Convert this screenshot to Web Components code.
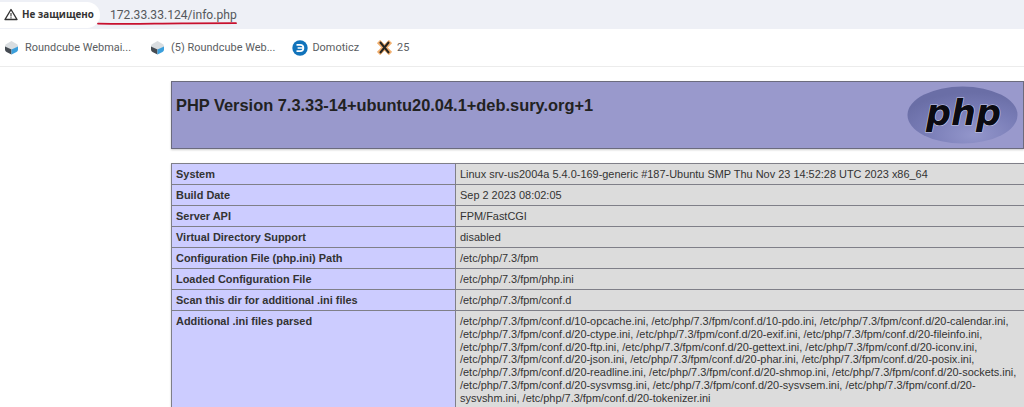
<!DOCTYPE html>
<html><head><meta charset="utf-8">
<style>html,body{margin:0;padding:0;background:#fff;height:407px;overflow:hidden}body{font-family:"Liberation Sans",Arial,sans-serif}</style>
</head><body>
<browser-chrome url="172.33.33.124/info.php" security="Не защищено">
<book-mark label="Roundcube Webmai..." kind="cube" style="--gap:19px"></book-mark>
<book-mark label="(5) Roundcube Web..." kind="cube" style="--gap:17px"></book-mark>
<book-mark label="Domoticz" kind="dom" style="--gap:18px;--ig:4px"></book-mark>
<book-mark label="25" kind="x" style="--ig:5px"></book-mark>
</browser-chrome>
<php-page>
<php-header>PHP Version 7.3.33-14+ubuntu20.04.1+deb.sury.org+1</php-header>
<php-table>
<php-row name="System">Linux srv-us2004a 5.4.0-169-generic #187-Ubuntu SMP Thu Nov 23 14:52:28 UTC 2023 x86_64</php-row>
<php-row name="Build Date">Sep 2 2023 08:02:05</php-row>
<php-row name="Server API">FPM/FastCGI</php-row>
<php-row name="Virtual Directory Support">disabled</php-row>
<php-row name="Configuration File (php.ini) Path">/etc/php/7.3/fpm</php-row>
<php-row name="Loaded Configuration File">/etc/php/7.3/fpm/php.ini</php-row>
<php-row name="Scan this dir for additional .ini files">/etc/php/7.3/fpm/conf.d</php-row>
<php-row name="Additional .ini files parsed">/etc/php/7.3/fpm/conf.d/10-opcache.ini, /etc/php/7.3/fpm/conf.d/10-pdo.ini, /etc/php/7.3/fpm/conf.d/20-calendar.ini,<br>/etc/php/7.3/fpm/conf.d/20-ctype.ini, /etc/php/7.3/fpm/conf.d/20-exif.ini, /etc/php/7.3/fpm/conf.d/20-fileinfo.ini,<br>/etc/php/7.3/fpm/conf.d/20-ftp.ini, /etc/php/7.3/fpm/conf.d/20-gettext.ini, /etc/php/7.3/fpm/conf.d/20-iconv.ini,<br>/etc/php/7.3/fpm/conf.d/20-json.ini, /etc/php/7.3/fpm/conf.d/20-phar.ini, /etc/php/7.3/fpm/conf.d/20-posix.ini,<br>/etc/php/7.3/fpm/conf.d/20-readline.ini, /etc/php/7.3/fpm/conf.d/20-shmop.ini, /etc/php/7.3/fpm/conf.d/20-sockets.ini,<br>/etc/php/7.3/fpm/conf.d/20-sysvmsg.ini, /etc/php/7.3/fpm/conf.d/20-sysvsem.ini, /etc/php/7.3/fpm/conf.d/20-<br>sysvshm.ini, /etc/php/7.3/fpm/conf.d/20-tokenizer.ini</php-row>
</php-table>
</php-page>
<script>
class BrowserChrome extends HTMLElement{
  constructor(){super();const s=this.attachShadow({mode:'open'});
  s.innerHTML=`<style>
  :host{display:block;font-family:"Roboto","Liberation Sans",sans-serif}
  .addr{height:29px;background:#eef0f6;display:flex;align-items:center;position:relative}
  .pill{height:26px;width:100px;box-sizing:border-box;padding:0 0 0 4px;background:#fff;border-radius:0 13px 13px 0;display:flex;align-items:center;gap:4px;font-size:9.8px;font-weight:700;color:#333;font-family:"Open Sans","Liberation Sans",sans-serif;}
  .url{margin-left:10px;font-size:12.1px;color:#55585c;font-family:"Roboto",sans-serif}
  .ul{position:absolute;left:97px;top:21px}
  .bar{height:38px;background:#fff;border-bottom:1px solid #ececec;display:flex;align-items:center;padding:0 0 0 4px;box-sizing:border-box}
  </style>
  <div class="addr"><div class="pill"><svg width="14" height="13" viewBox="0 0 14 13"><path d="M7 1.5 13 11.5H1Z" fill="none" stroke="#333" stroke-width="1.4" stroke-linejoin="round"/><path d="M7 5v3.4M7 9.3v1.1" stroke="#333" stroke-width="1.1"/></svg><span>${this.getAttribute('security')}</span></div>
  <div class="url">${this.getAttribute('url')}</div>
  <svg class="ul" width="142" height="5" viewBox="0 0 142 5"><path d="M1 2.6C40 3.6 60 2.2 90 2.4L139 2.2" stroke="#c8102e" stroke-width="1.8" fill="none" stroke-linecap="round"/></svg></div>
  <div class="bar"><slot></slot></div>`;}
}
customElements.define('browser-chrome',BrowserChrome);
const ICONS={
 cube:`<svg width="15" height="15" viewBox="0 0 15 15"><path d="M7.5 1 13.5 4.5 14 7 7.5 10 1 7 1.5 4.5Z" fill="#d9dde0"/><path d="M1 6.5 7.5 9.5V14.5L2.5 12Q1 11 1 9.5Z" fill="#454b52"/><path d="M14 6.5 7.5 9.5V14.5L12.5 12Q14 11 14 9.5Z" fill="#3b9fdc"/></svg>`,
 dom:`<svg width="16" height="16" viewBox="0 0 16 16"><circle cx="8" cy="8" r="7.7" fill="#1173bb"/><path d="M4.5 4.8H8.2a3.2 3.2 0 0 1 0 6.4H4.5M5.6 8H10.5" fill="none" stroke="#fff" stroke-width="1.7"/></svg>`,
 x:`<svg width="15" height="15" viewBox="0 0 15 15"><path d="M1.5 1.5 13.5 13.5M13.5 1.5 1.5 13.5" stroke="#f2b070" stroke-width="4.6"/><path d="M3 2 12 13M12 2 3 13" stroke="#26241f" stroke-width="2"/></svg>`};
class BookMark extends HTMLElement{
  constructor(){super();const s=this.attachShadow({mode:'open'});
  s.innerHTML=`<style>
  :host{display:flex;align-items:center;gap:var(--ig,6px);font-family:"Roboto","Liberation Sans",sans-serif;font-size:10.9px;color:#5a5d61;letter-spacing:.03px;margin-right:var(--gap,17px)}
  svg{display:block}
  </style>${ICONS[this.getAttribute('kind')]}<span>${this.getAttribute('label')}</span>`;}
}
customElements.define('book-mark',BookMark);
class PhpPage extends HTMLElement{
  constructor(){super();this.attachShadow({mode:'open'}).innerHTML=`<style>
  :host{display:block;padding:14px 0 0 171px;color:#222;font-family:"Liberation Sans",Arial,sans-serif}
  </style><slot></slot>`;}
}
customElements.define('php-page',PhpPage);
class PhpHeader extends HTMLElement{
  constructor(){super();this.attachShadow({mode:'open'}).innerHTML=`<style>
  :host{display:flex;justify-content:space-between;height:68px;box-sizing:border-box;background:#9999cc;border:1px solid #6b6b7d;padding:0 5px 0 4px;margin-bottom:14px;box-shadow:0 1px 2px #ccc}
  h1{margin:0;padding-top:13px;font-size:16.4px;line-height:20px;font-weight:700;color:#222}
  svg{margin-top:4px;display:block}
  .t{font:oblique 700 35px "DejaVu Sans",sans-serif;fill:#0b0b12;stroke:#c9cbe8;stroke-width:1.2px;paint-order:stroke}
  </style><h1><slot></slot></h1>
  <svg width="111" height="58" viewBox="0 0 111 58"><defs><radialGradient id="g" cx=".6" cy=".85" r=".75"><stop offset="0" stop-color="#9396cb"/><stop offset=".6" stop-color="#787cb6"/><stop offset="1" stop-color="#6a6ea6"/></radialGradient></defs><ellipse cx="55.5" cy="29" rx="55" ry="28.5" fill="url(#g)"/><text class="t" x="19" y="39">php</text></svg>`;}
}
customElements.define('php-header',PhpHeader);
class PhpTable extends HTMLElement{
  constructor(){super();this.attachShadow({mode:'open'}).innerHTML=`<style>
  :host{display:grid;grid-template-columns:283px 1fr;background:#7f7f88;gap:1px;padding:1px 0 1px 1px;box-shadow:0 1px 2px #ccc}
  ::slotted(php-row){display:contents}
  </style><slot></slot>`;}
}
customElements.define('php-table',PhpTable);
class PhpRow extends HTMLElement{
  constructor(){super();this.attachShadow({mode:'open'}).innerHTML=`<style>
  :host{display:contents;font-size:10.95px;line-height:12.75px}
  div{padding:4px 0 3px 4px;min-height:13px;white-space:nowrap}
  .e{background:#ccccff;font-weight:700;color:#333}
  .v{background:#dcdcdc;color:#333}
  </style><div class="e">${this.getAttribute('name')}</div><div class="v"><slot></slot></div>`;}
}
customElements.define('php-row',PhpRow);
</script>
</body></html>
